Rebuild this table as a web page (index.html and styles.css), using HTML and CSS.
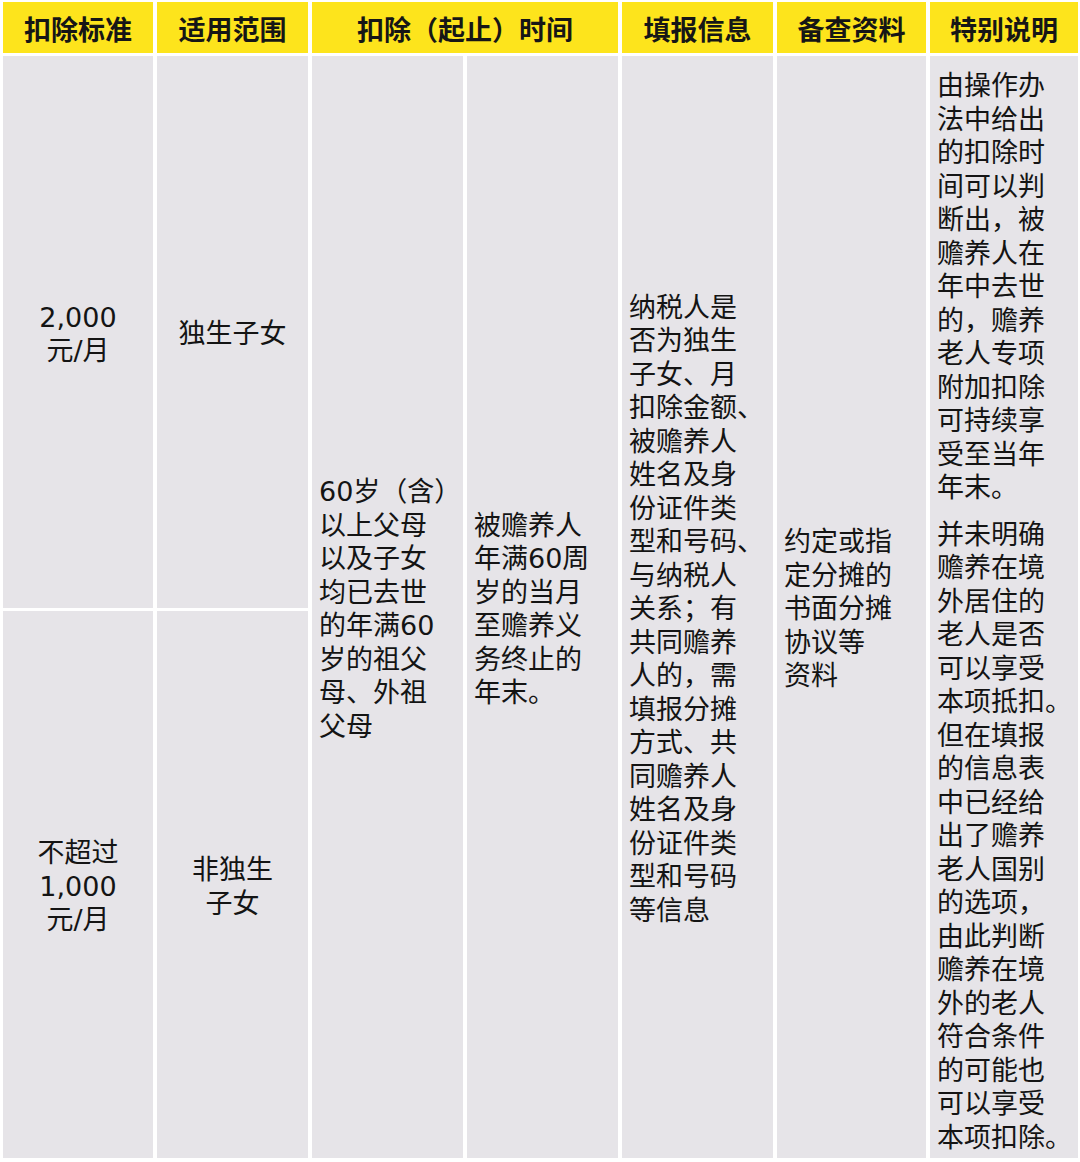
FILE: index.html
```html
<!DOCTYPE html>
<html lang="zh-CN">
<head>
<meta charset="utf-8">
<title>赡养老人专项附加扣除</title>
<link rel="stylesheet" href="styles.css">
</head>
<body>
<div class="table">
  <div class="th">扣除标准</div>
  <div class="th">适用范围</div>
  <div class="th span2">扣除（起止）时间</div>
  <div class="th">填报信息</div>
  <div class="th">备查资料</div>
  <div class="th">特别说明</div>

  <div class="td center r1 c1">2,000<br>元/月</div>
  <div class="td center r1 c2">独生子女</div>
  <div class="td left full c3">60岁（含）<br>以上父母<br>以及子女<br>均已去世<br>的年满60<br>岁的祖父<br>母、外祖<br>父母</div>
  <div class="td left full c4">被赡养人<br>年满60周<br>岁的当月<br>至赡养义<br>务终止的<br>年末。</div>
  <div class="td left full c5">纳税人是<br>否为独生<br>子女、月<br>扣除金额、<br>被赡养人<br>姓名及身<br>份证件类<br>型和号码、<br>与纳税人<br>关系；有<br>共同赡养<br>人的，需<br>填报分摊<br>方式、共<br>同赡养人<br>姓名及身<br>份证件类<br>型和号码<br>等信息</div>
  <div class="td left full c6">约定或指<br>定分摊的<br>书面分摊<br>协议等<br>资料</div>
  <div class="td top full c7">
    <p class="para">由操作办<br>法中给出<br>的扣除时<br>间可以判<br>断出，被<br>赡养人在<br>年中去世<br>的，赡养<br>老人专项<br>附加扣除<br>可持续享<br>受至当年<br>年末。</p>
    <p class="para">并未明确<br>赡养在境<br>外居住的<br>老人是否<br>可以享受<br>本项抵扣。<br>但在填报<br>的信息表<br>中已经给<br>出了赡养<br>老人国别<br>的选项，<br>由此判断<br>赡养在境<br>外的老人<br>符合条件<br>的可能也<br>可以享受<br>本项扣除。</p>
  </div>

  <div class="td center r2 c1">不超过<br>1,000<br>元/月</div>
  <div class="td center r2 c2">非独生<br>子女</div>
</div>
</body>
</html>
```

FILE: styles.css
```css
html, body {
  margin: 0;
  padding: 0;
  background: #ffffff;
}

body {
  font-family: "DejaVu Sans", "Noto Sans CJK SC", sans-serif;
  color: #141414;
}

.table {
  display: grid;
  grid-template-columns: 150px 151px 151px 151px 151px 149px 148px;
  grid-template-rows: 51px 552px 547px;
  column-gap: 4px;
  row-gap: 3px;
  padding: 2px 0 0 3px;
  width: 1075px;
}

.th {
  background: #fde41c;
  font-family: "Noto Sans CJK SC", sans-serif;
  font-weight: 700;
  font-size: 27px;
  display: flex;
  align-items: center;
  justify-content: center;
  white-space: nowrap;
  color: #161616;
  padding-top: 1px;
  box-sizing: border-box;
}

.span2 {
  grid-column: span 2;
}

.td {
  background: #e6e4e8;
  font-size: 27px;
  line-height: 33.5px;
  white-space: nowrap;
  display: flex;
  box-sizing: border-box;
  padding-top: 4px;
}

.center {
  align-items: center;
  justify-content: center;
  text-align: center;
}

.left {
  align-items: center;
  justify-content: flex-start;
  text-align: left;
  padding-left: 7px;
}

.top {
  flex-direction: column;
  justify-content: flex-start;
  padding: 13px 0 0 7px;
}

.para {
  margin: 0;
}

.para + .para {
  margin-top: 13px;
}

.r1 { grid-row: 2; }
.r2 { grid-row: 3; }
.full { grid-row: 2 / span 2; }

.c1 { grid-column: 1; }
.c2 { grid-column: 2; }
.c3 { grid-column: 3; }
.c4 { grid-column: 4; }
.c5 { grid-column: 5; }
.c6 { grid-column: 6; }
.c7 { grid-column: 7; }
```
